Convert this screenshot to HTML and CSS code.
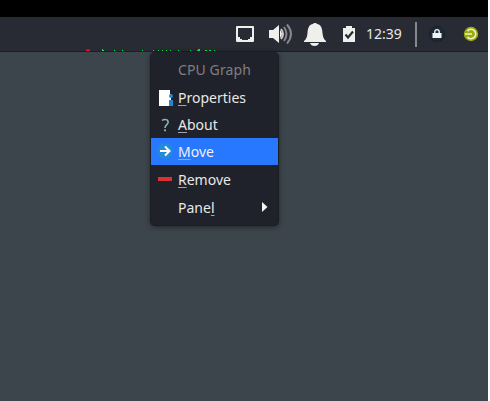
FILE: index.html
```html
<!DOCTYPE html>
<html lang="en">
<head>
<meta charset="utf-8">
<title>Desktop panel</title>
<link rel="stylesheet" href="styles.css">
</head>
<body>
<div class="screen">
  <div class="bezel"></div>
  <header class="panel">
    <svg class="graph" width="140" height="4" viewBox="0 0 140 4" shape-rendering="crispEdges">
      <path fill="#8d1c2c" d="M6 0h4v1H6z"/><path fill="#e31824" d="M6 1h4v1H6z"/>
      <path fill="#00f03c" d="M22 0h1v2h-1zM23 1h1v1h-1zM34 1h1v1h-1zM42 1h1v1h-1zM62 1h1v1h-1zM73 1h1v1h-1zM78 1h1v1h-1zM82 1h1v1h-1zM86 1h1v1h-1zM90 1h1v1h-1zM98 1h1v1h-1zM110 1h1v1h-1zM117 1h3v1h-3zM118 0h2v1h-2zM125 1h2v1h-2zM129 1h2v1h-2zM134 1h1v1h-1z"/>
    </svg>
    <svg class="tray" width="250" height="34" viewBox="0 0 250 34">
      <g fill="#efefec">
        <path fill-rule="evenodd" d="M7 9h16q1 0 1 1v14q0 1-1 1H7q-1 0-1-1V10q0-1 1-1zM8 11v9h2v2h2v1h6v-1h2v-2h2v-9z"/>
        <path d="M39 13h4l6-5v18l-6-5h-4z"/>
        <path d="M50 13q4 4 0 8z"/>
        <path d="M74 25v-1q3-2 3.500-8c.4-6 2-8.500 5.500-9q0-1 2-1t2 1c3.500.5 5.100 3 5.500 9q.5 6 3.500 8v1zM80 26h9q-1 3-4.500 3T80 26z"/>
        <path d="M113 11h3V9h6v2h3v14h-12z"/>
      </g>
      <g fill="none" stroke-width="2"><path stroke="#c9cacb" d="M51 12q4 5 0 10"/><path stroke="#85878a" d="M54 10q5 7 0 14M57 7.500q8 9.500 0 19"/></g>
      <path d="M115.500 17.500l2.500 3 5-6" fill="none" stroke="#282b34" stroke-width="2.200"/>
      <rect x="185" y="5" width="2" height="25" fill="#85888d"/>
      <circle cx="207" cy="17" r="7.500" fill="#1b2c38" stroke="#171e27" stroke-width="1"/>
      <path d="M204.800 17v-2.200a2.200 2.200 0 0 1 4.400 0V17" fill="none" stroke="#f1f3f3" stroke-width="1.400"/>
      <rect x="202.500" y="16" width="9" height="5" fill="#f1f3f3"/>
      <circle cx="241" cy="17" r="7.200" fill="#9aaa0b"/>
      <path d="M237.400 14a4.700 4.700 0 1 1 0 6M235 17h7" fill="none" stroke="#edf1d1" stroke-width="1.600"/>
    </svg>
    <time class="clock">12:39</time>
  </header>
  <ul class="menu">
    <li class="title">CPU Graph</li>
    <li><svg class="icon" width="16" height="16" viewBox="0 0 16 16"><path fill="#fff" d="M1 0h12v16H1z"/><path fill="#20222b" d="M12 0h1v4h-1z"/><circle cx="13" cy="6" r="2" fill="#2586cf"/><path fill="#2586cf" d="M11 10h4v6h-4z"/></svg><span><u>P</u>roperties</span></li>
    <li><svg class="icon" width="16" height="16" viewBox="0 0 16 16"><path d="M4 3.500q1.200-1 3-1c3.500 0 4 3 2 4.800Q7 8.800 7 11" fill="none" stroke="#8fb3b5" stroke-width="1.600"/><circle cx="7" cy="13.300" r="1.100" fill="#8fb3b5"/></svg><span><u>A</u>bout</span></li>
    <li class="active"><svg class="icon" width="16" height="16" viewBox="0 0 16 16"><circle cx="7" cy="7" r="7.800" fill="#258bd8"/><path d="M2 7h9M7 2.500L11.500 7 7 11.500" fill="none" stroke="#fff" stroke-width="2"/></svg><span><u>M</u>ove</span></li>
    <li class="remove"><svg class="icon" width="16" height="16" viewBox="0 0 16 16"><path fill="#dc3131" d="M0 6h14v4H0z"/></svg><span><u>R</u>emove</span></li>
    <li class="panel-item"><span class="icon"></span><span>Pane<u>l</u></span><svg class="arrow" width="6" height="10" viewBox="0 0 6 10"><path fill="#f4f4f2" d="M0 0l5.500 5L0 10z"/></svg></li>
  </ul>
</div>
</body>
</html>
```
FILE: styles.css
```css
body { margin: 0; background: #fff; font: 14px/27px "Noto Sans", sans-serif; color: #e8e8e5; overflow: hidden; }
.screen { width: 488px; height: 401px; background: #3d454c; }
.bezel { height: 17px; background: #000; }
.panel { position: relative; display: flex; justify-content: flex-end; height: 35px; box-sizing: border-box; background: #282b34; border-bottom: 1px solid #1c1f26; }
.graph { position: absolute; left: 80px; bottom: -2px; }
.tray { margin-right: 8px; overflow: visible; }
.clock { position: absolute; left: 366px; top: 3px; }
.menu { position: absolute; left: 150px; top: 52px; width: 129px; height: 174px; box-sizing: border-box; margin: 0; padding: 4px 1px; list-style: none; background: #20222b; border: 1px solid #1b1d25; border-top: 0; border-radius: 5px; box-shadow: 0 1px 5px #0007; display: flex; flex-direction: column; }
.menu li { display: flex; align-items: center; height: 27px; padding-left: 6px; margin: 0 -1px; }
.menu .title { color: #7e7f81; padding-left: 27px; height: 28px; line-height: 27px; align-items: flex-start; letter-spacing: .1px; }
.menu .active { background: #2777ff; color: #eef3fc; }
.menu .remove { height: 28px; }
.menu .panel-item { height: 28px; }
.icon { width: 16px; height: 16px; margin: 0 4px 0 1px; overflow: visible; flex: none; }
.arrow { margin-left: auto; margin-right: 10px; }
u { text-decoration-thickness: 1px; text-underline-offset: 2px; text-decoration-color: #a4a5a7; }
```
